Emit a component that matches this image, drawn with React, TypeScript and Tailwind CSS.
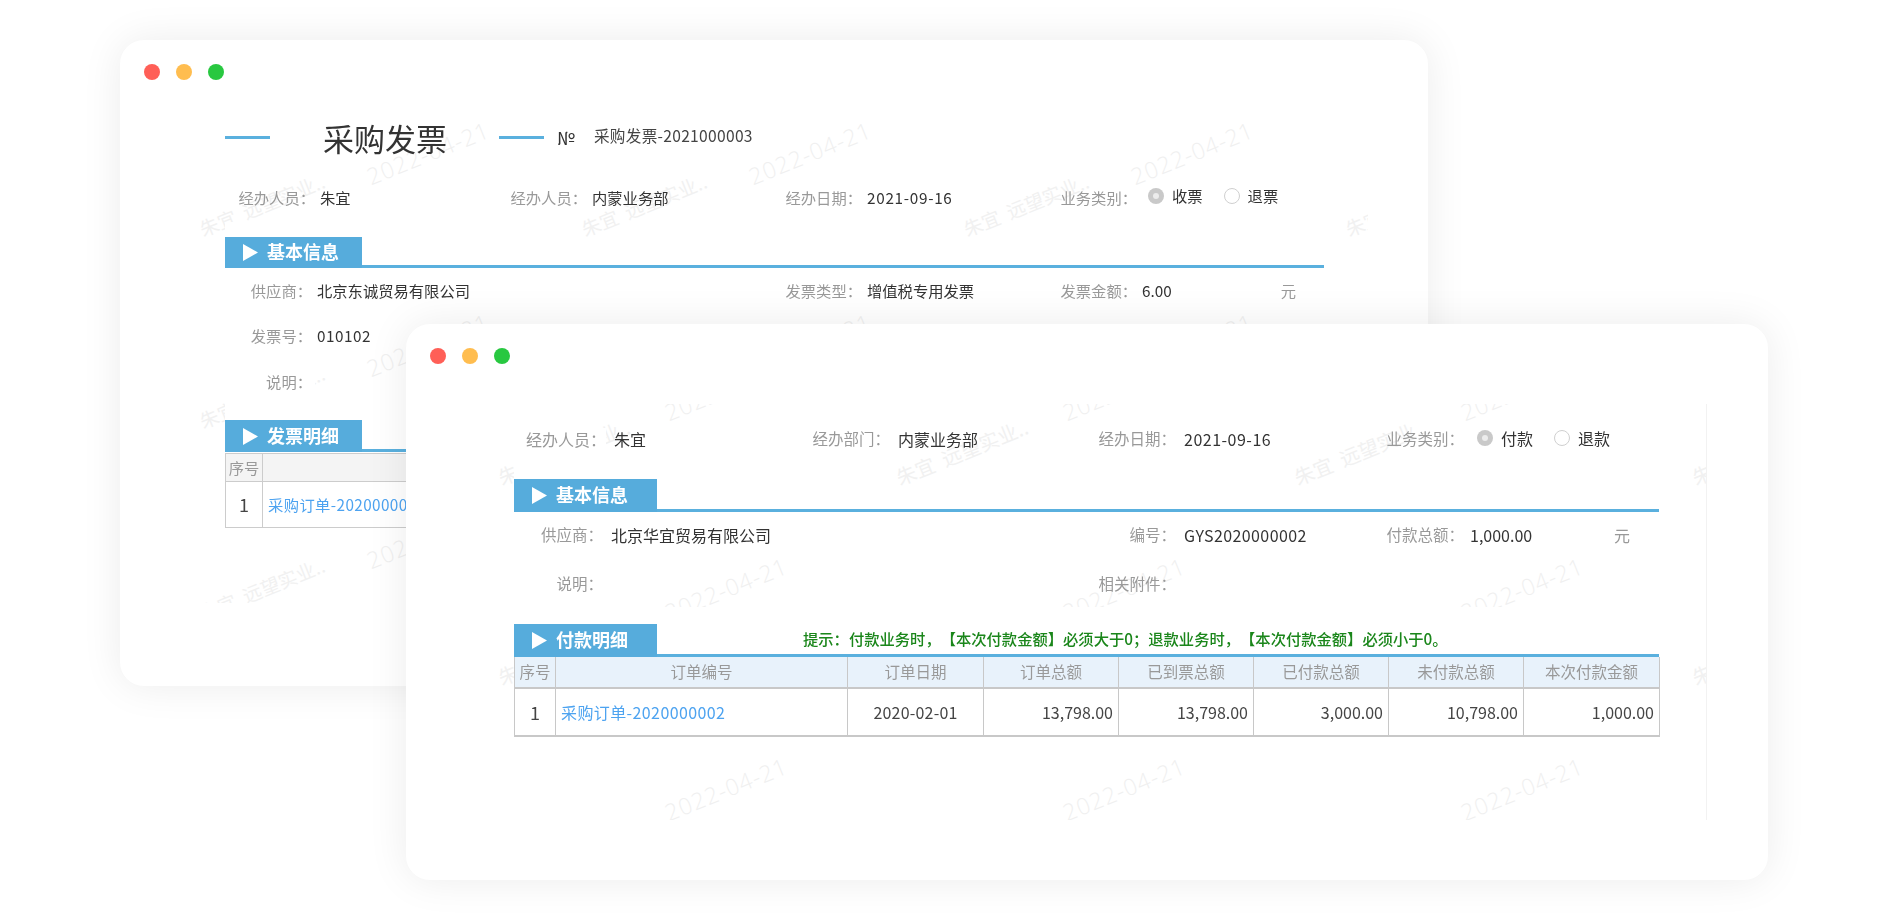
import type { ReactNode } from "react";

function Dots() {
    return (
        <div className="flex gap-4">
            <div className="w-4 h-4 rounded-full bg-[#ff5f57]" />
            <div className="w-4 h-4 rounded-full bg-[#ffbd4f]" />
            <div className="w-4 h-4 rounded-full bg-[#28c840]" />
        </div>
    );
}

function Field({ label, value, labelClass, gapClass }: { label?: string; value?: ReactNode; labelClass: string; gapClass: string }) {
    return (
        <div className="flex items-center h-6 pb-[2px] whitespace-nowrap">
            <span className={`${labelClass} text-right text-[#999999]`}>{label}</span>
            <div className={`${gapClass} text-[#333333] flex items-center`}>{value}</div>
        </div>
    );
}

function Radio({ checked, text }: { checked?: boolean; text: string }) {
    return (
        <div className="flex items-center gap-[8px] mb-[3px]">
            {checked ? (
                <div className="w-4 h-4 rounded-full bg-[#c9c9c9] flex items-center justify-center">
                    <div className="w-[6px] h-[6px] rounded-full bg-[#ececec]" />
                </div>
            ) : (
                <div className="w-4 h-4 rounded-full border border-[#cfcfcf] bg-white" />
            )}
            <span className="text-[#333333]">{text}</span>
        </div>
    );
}

function SectionBar({ title, heightClass, widthClass, children }: { title: string; heightClass: string; widthClass: string; children?: ReactNode }) {
    return (
        <div className={`flex ${heightClass} border-b-[3px] border-[#5ab0de]`}>
            <div className={`${widthClass} -mb-[3px] bg-[#56acdc] flex items-center pl-[18px] gap-[9px]`}>
                <svg width="15" height="17" viewBox="0 0 15 17">
                    <polygon points="0,0 15,8.5 0,17" fill="#ffffff" />
                </svg>
                <span className="text-white font-bold text-[18px] leading-none mb-[3px]">{title}</span>
            </div>
            {children}
        </div>
    );
}

function Watermark({ nameClass, dateClass }: { nameClass: string; dateClass: string }) {
    return (
        <div className="relative w-full h-full">
            <span className={`${nameClass} absolute -translate-x-1/2 -translate-y-1/2 -rotate-[22deg] whitespace-pre text-[#f1f1f1]`}>朱宜  远望实业..</span>
            <span className={`${dateClass} absolute -translate-x-1/2 -translate-y-1/2 -rotate-[22deg] whitespace-pre font-['Open_Sans',sans-serif] font-light text-[23px] tracking-[1px] text-[#f0f0f0]`}>2022-04-21</span>
        </div>
    );
}

const payHeaders = ["序号", "订单编号", "订单日期", "订单总额", "已到票总额", "已付款总额", "未付款总额", "本次付款金额"];

function BackWindow() {
    return (
        <div className="absolute left-[120px] top-[40px] w-[1308px] h-[646px] bg-white rounded-[24px] shadow-[0_0_40px_rgba(0,0,0,0.08)] text-[15.3px]">
            <div className="absolute left-[80px] top-[70px] w-[1168px] h-[493px] overflow-hidden">
                <div className="grid grid-cols-[repeat(4,382px)] auto-rows-[192px]">
                    {Array.from({ length: 12 }).map((_, i) => (
                        <Watermark key={i} nameClass="left-[62px] top-[95px] text-[19px]" dateClass="left-[228px] top-[43px]" />
                    ))}
                </div>
                {/* 워터마크를 가리는 흰 영역 */}
                <div className="absolute left-[25px] top-[112px] w-[115px] h-[15px] bg-white" />
                <div className="absolute left-[25px] top-[261px] w-[90px] h-[49px] bg-white" />
                <div className="absolute left-[25px] top-[310px] w-[1099px] h-[108px] bg-white" />
            </div>
            <div className="relative pt-6 pl-6">
                <Dots />
            </div>
            <div className="relative pl-[105px] pr-[104px] blur-[0.35px]">
                <div className="flex items-center h-10 mt-[37px] text-[#333333]">
                    <div className="w-[45px] h-[3px] bg-[#5ab0de]" />
                    <span className="ml-[53px] w-[124px] text-[31px] leading-none whitespace-nowrap">采购发票</span>
                    <div className="ml-[52px] w-[45px] h-[3px] bg-[#5ab0de]" />
                    <span className="ml-[13px] text-[18px]">№</span>
                    <span className="ml-[19px] mb-[2px] text-[15.6px] tracking-[0.3px] text-[#444444]">采购发票-2021000003</span>
                </div>
                <div className="grid grid-cols-[272px_275px_275px_1fr] mt-[29px]">
                    <Field label="经办人员：" value="朱宜" labelClass="w-[90px]" gapClass="ml-[5px]" />
                    <Field label="经办人员：" value="内蒙业务部" labelClass="w-[90px]" gapClass="ml-[5px]" />
                    <Field label="经办日期：" value={<span className="tracking-[0.7px]">2021-09-16</span>} labelClass="w-[90px]" gapClass="ml-[5px]" />
                    <Field
                        label="业务类别："
                        labelClass="w-[90px]"
                        gapClass="ml-[11px]"
                        value={
                            <div className="flex gap-[21px]">
                                <Radio checked text="收票" />
                                <Radio text="退票" />
                            </div>
                        }
                    />
                </div>
                <div className="mt-[27px]">
                    <SectionBar title="基本信息" heightClass="h-[31px]" widthClass="w-[137px]" />
                </div>
                <div className="grid grid-cols-[547px_275px_1fr] mt-[11px]">
                    <Field label="供应商：" value="北京东诚贸易有限公司" labelClass="w-[87px]" gapClass="ml-[5px]" />
                    <Field label="发票类型：" value="增值税专用发票" labelClass="w-[90px]" gapClass="ml-[5px]" />
                    <Field
                        label="发票金额："
                        labelClass="w-[90px]"
                        gapClass="ml-[5px]"
                        value={
                            <div className="flex w-[154px] justify-between">
                                <span>6.00</span>
                                <span className="text-[#999999]">元</span>
                            </div>
                        }
                    />
                </div>
                <div className="mt-[21px]">
                    <Field label="发票号：" value={<span className="tracking-[0.5px]">010102</span>} labelClass="w-[87px]" gapClass="ml-[5px]" />
                </div>
                <div className="mt-[22px]">
                    <Field label="说明：" labelClass="w-[87px]" gapClass="ml-[5px]" />
                </div>
                <div className="mt-[26px]">
                    <SectionBar title="发票明细" heightClass="h-8" widthClass="w-[137px]" />
                </div>
                <div className="grid grid-cols-[37px_1fr] mt-px border-l border-[#cccccc] bg-white">
                    <div className="h-[29px] flex items-center justify-center bg-[#f4f4f4] border-y border-r border-[#cccccc] text-[#999999]">序号</div>
                    <div className="h-[29px] flex items-center justify-center bg-[#f4f4f4] border-y border-[#cccccc] text-[#999999]">订单编号</div>
                    <div className="h-[46px] flex items-center justify-center border-b border-r border-[#cccccc] text-[18px] text-[#444444]">1</div>
                    <div className="h-[46px] flex items-center pl-[5px] border-b border-[#cccccc] text-[#4da3f0] tracking-[0.4px]">采购订单-2020000002</div>
                </div>
            </div>
        </div>
    );
}

function FrontWindow() {
    return (
        <div className="absolute left-[406px] top-[324px] w-[1362px] h-[556px] bg-white rounded-[24px] shadow-[0_0_40px_rgba(0,0,0,0.08)] text-[16px]">
            <div className="absolute left-[89px] top-[80px] w-[1212px] h-[416px] overflow-hidden border-r border-[#f2f2f2]">
                <div className="-mt-[100px] grid grid-cols-[repeat(4,398px)] auto-rows-[200px]">
                    {Array.from({ length: 12 }).map((_, i) => (
                        <Watermark key={i} nameClass="left-[69px] top-[148px] text-[20px]" dateClass="left-[231px] top-[85px]" />
                    ))}
                </div>
                {/* 워터마크를 가리는 흰 영역 */}
                <div className="absolute left-[19px] top-[24px] w-[92px] h-[51px] bg-white" />
                <div className="absolute left-[19px] top-[203px] w-[1145px] h-[130px] bg-white" />
            </div>
            <div className="relative pt-6 pl-6">
                <Dots />
            </div>
            <div className="relative pl-[108px] pr-[109px] blur-[0.35px]">
                <div className="grid grid-cols-[284px_286px_288px_1fr] mt-[64px]">
                    <Field label="经办人员：" value="朱宜" labelClass="w-[92px]" gapClass="ml-2" />
                    <Field label="经办部门：" value="内蒙业务部" labelClass="w-[92px] text-[15.5px]" gapClass="ml-2" />
                    <Field label="经办日期：" value={<span className="tracking-[0.5px]">2021-09-16</span>} labelClass="w-[92px] text-[15.5px]" gapClass="ml-2" />
                    <Field
                        label="业务类别："
                        labelClass="w-[92px] text-[15.5px]"
                        gapClass="ml-[13px]"
                        value={
                            <div className="flex gap-[21px]">
                                <Radio checked text="付款" />
                                <Radio text="退款" />
                            </div>
                        }
                    />
                </div>
                <div className="mt-[27px]">
                    <SectionBar title="基本信息" heightClass="h-[33px]" widthClass="w-[143px]" />
                </div>
                <div className="grid grid-cols-[570px_288px_1fr] mt-3">
                    <Field label="供应商：" value="北京华宜贸易有限公司" labelClass="w-[89px] text-[15.5px]" gapClass="ml-2" />
                    <Field label="编号：" value={<span className="tracking-[0.4px]">GYS2020000002</span>} labelClass="w-[92px] text-[15.5px]" gapClass="ml-2" />
                    <Field
                        label="付款总额："
                        labelClass="w-[92px] text-[15.5px]"
                        gapClass="ml-[6px]"
                        value={
                            <div className="flex w-[160px] justify-between">
                                <span>1,000.00</span>
                                <span className="text-[#999999]">元</span>
                            </div>
                        }
                    />
                </div>
                <div className="grid grid-cols-[570px_1fr] mt-[25px]">
                    <Field label="说明：" labelClass="w-[89px] text-[15.5px]" gapClass="ml-2" />
                    <Field label="相关附件：" labelClass="w-[92px] text-[15.5px]" gapClass="ml-2" />
                </div>
                <div className="mt-[27px]">
                    <SectionBar title="付款明细" heightClass="h-[33px]" widthClass="w-[143px]">
                        <span className="ml-[146px] mb-[2px] self-center text-[15.3px] font-medium [text-spacing-trim:space-all] text-[#1a861a] whitespace-nowrap">提示：付款业务时，【本次付款金额】必须大于0；退款业务时，【本次付款金额】必须小于0。</span>
                    </SectionBar>
                </div>
                <div className="grid grid-cols-[41px_292px_136px_135px_135px_135px_135px_136px] border-l border-[#c8c8c8] bg-white">
                    {payHeaders.map((h) => (
                        <div key={h} className="h-[32px] flex items-center justify-center bg-[#e8f2fb] border-b-2 border-r border-[#c8c8c8] text-[15.5px] text-[#999999] whitespace-nowrap">
                            {h}
                        </div>
                    ))}
                    <div className="h-12 flex items-center justify-center border-b-2 border-r border-[#c8c8c8] text-[18px] text-[#444444]">1</div>
                    <div className="h-12 flex items-center pl-[5px] border-b-2 border-r border-[#c8c8c8] text-[#4da3f0] tracking-[0.4px]">采购订单-2020000002</div>
                    <div className="h-12 flex items-center justify-center border-b-2 border-r border-[#c8c8c8] text-[#444444] tracking-[0.2px]">2020-02-01</div>
                    {["13,798.00", "13,798.00", "3,000.00", "10,798.00", "1,000.00"].map((n, i) => (
                        <div key={i} className="h-12 flex items-center justify-end pr-[5px] border-b-2 border-r border-[#c8c8c8] text-[#444444]">
                            {n}
                        </div>
                    ))}
                </div>
            </div>
        </div>
    );
}

export default function App() {
    return (
        <div className="relative w-[1888px] h-[920px] overflow-hidden bg-white font-['Noto_Sans_CJK_SC',sans-serif]">
            <BackWindow />
            <FrontWindow />
        </div>
    );
}
